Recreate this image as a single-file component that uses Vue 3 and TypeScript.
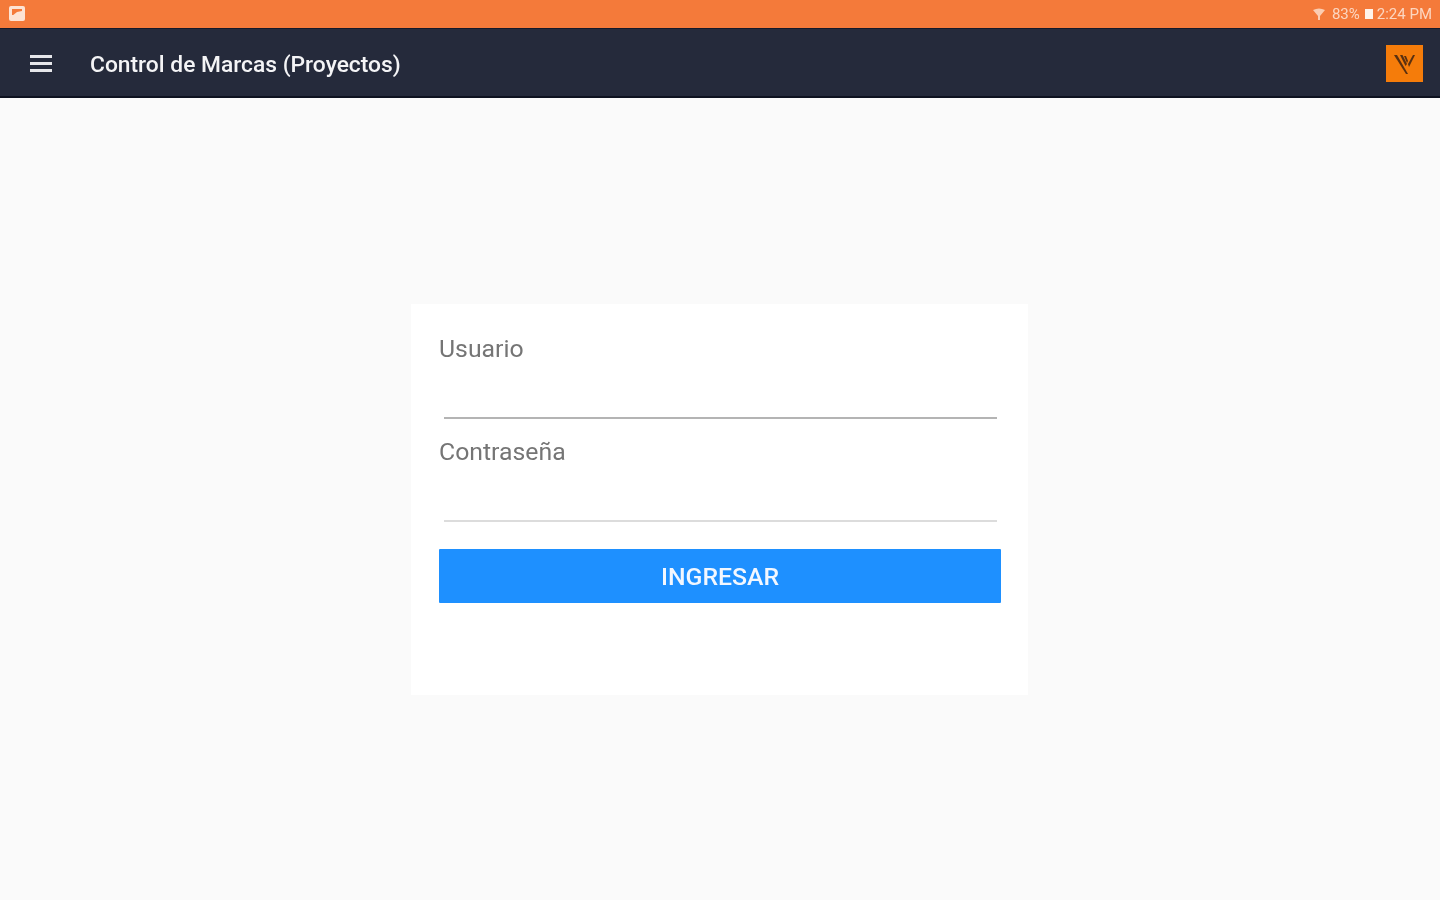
<script setup lang="ts">
import { ref } from 'vue'

const usuario = ref('')
const contrasena = ref('')
</script>

<template>
  <div class="page">
    <div class="status-bar">
      <svg class="pic-icon" width="16" height="16" viewBox="0 0 16 16">
        <rect width="16" height="15" rx="2" fill="#fde3d4" />
        <rect x="3" y="3" width="10" height="6" fill="#f57a3a" />
        <path d="M3 10 L8 6 L13 5 V11 H3 Z" fill="#fde3d4" />
      </svg>
      <div class="status-right">
        <svg class="wifi" width="12" height="13" viewBox="0 0 12 13">
          <path d="M0 2 Q6 -1 12 2 L7 8 V12 H5 V8 Z" fill="#fbcdb2" />
        </svg>
        <span>83%</span>
        <span class="battery"></span>
        <span>2:24 PM</span>
      </div>
    </div>

    <header class="toolbar">
      <button class="menu-btn" aria-label="Menu">
        <span></span><span></span><span></span>
      </button>
      <h1 class="title">Control de Marcas (Proyectos)</h1>
      <div class="logo">
        <svg width="24" height="24" viewBox="0 0 24 24">
          <path d="M1 3 L4 3 L15 22 L13 22 Z" fill="#5a3010" />
          <path d="M7 3 L9.5 3 L14 12 L12.5 14 Z" fill="#5a3010" />
          <path d="M11 4 L13 4 L15 9 L14 11 Z" fill="#5a3010" />
          <path d="M15 12 L20 3 L22 3 L16 15 Z" fill="#5a3010" />
        </svg>
      </div>
    </header>

    <main class="content">
      <form class="card" @submit.prevent>
        <label class="field">
          <span class="field-label">Usuario</span>
          <input v-model="usuario" class="field-input" type="text" />
        </label>
        <label class="field second">
          <span class="field-label">Contraseña</span>
          <input v-model="contrasena" class="field-input light" type="password" />
        </label>
        <button class="submit" type="submit">INGRESAR</button>
      </form>
    </main>
  </div>
</template>

<style>
html, body {
  margin: 0;
  background: #fafafa;
}
</style>

<style scoped>
.page {
  height: 900px;
  display: flex;
  flex-direction: column;
  font-family: Roboto, "Liberation Sans", sans-serif;
  background: #fafafa;
  overflow: hidden;
  filter: blur(0.7px);
}

.status-bar {
  height: 28px;
  box-sizing: border-box;
  flex: none;
  background: #f47a3a;
  display: flex;
  align-items: center;
  justify-content: space-between;
  padding: 0 8px 0 9px;
  color: #fcd6c0;
  font-size: 15px;
}

.status-right {
  display: flex;
  align-items: center;
  gap: 2px;
}

.wifi {
  margin-right: 5px;
}

.battery {
  width: 8px;
  height: 10px;
  margin: 0 2px 0 3px;
  background: #fff3ea;
}

.toolbar {
  height: 70px;
  box-sizing: border-box;
  flex: none;
  background: #252a3b;
  border-top: 1px solid #14192a;
  border-bottom: 2px solid #0e1220;
  display: flex;
  align-items: center;
  padding: 2px 17px 0 30px;
}

.menu-btn {
  width: 22px;
  padding: 0;
  border: 0;
  background: none;
  display: flex;
  flex-direction: column;
  gap: 4px;
}

.menu-btn span {
  height: 3px;
  background: #e6e6ea;
}

.title {
  margin: 1px 0 0 38px;
  flex: 1;
  font-size: 22.8px;
  font-weight: 500;
  color: #f4f4f6;
}

.logo {
  width: 37px;
  height: 37px;
  background: #f57c0a;
  display: flex;
  align-items: center;
  justify-content: center;
}

.content {
  flex: 1;
  padding: 206px 1px 0 0;
}

.card {
  width: 617px;
  height: 391px;
  margin: 0 auto;
  box-sizing: border-box;
  background: #fff;
  padding: 30px 27px 0 28px;
  display: flex;
  flex-direction: column;
}

.field {
  display: flex;
  flex-direction: column;
}

.second {
  margin-top: 18px;
}

.field-label {
  font-size: 24.8px;
  line-height: 30px;
  color: #757575;
}

.field-input {
  margin: 37px 4px 0 5px;
  height: 16px;
  padding: 0;
  border: 0;
  border-bottom: 2px solid #b4b4b4;
  outline: none;
  background: none;
}

.light {
  border-bottom-color: #dcdcdc;
}

.submit {
  margin-top: 27px;
  height: 54px;
  border: 0;
  border-radius: 1px;
  background: #1e90ff;
  color: #f2f7ff;
  font-family: inherit;
  font-size: 24.8px;
  font-weight: 500;
}
</style>
